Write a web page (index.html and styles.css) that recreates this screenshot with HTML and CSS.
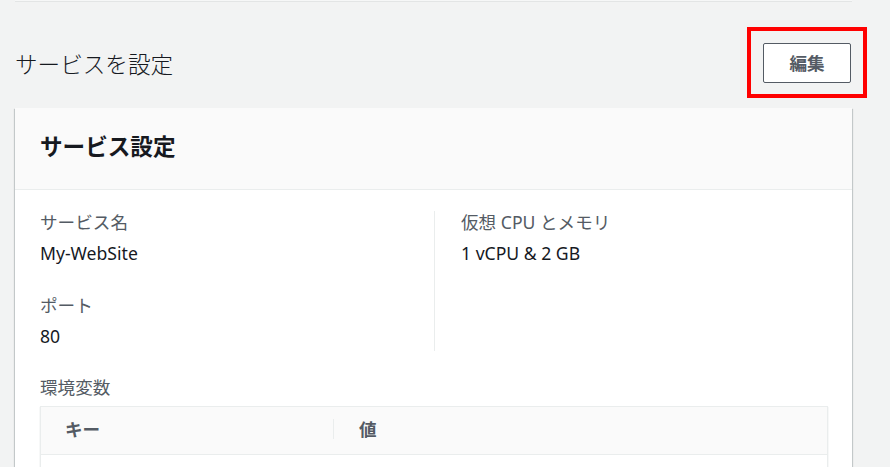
FILE: index.html
```html
<!DOCTYPE html>
<html lang="ja">
<head>
<meta charset="utf-8">
<link rel="stylesheet" href="styles.css">
</head>
<body>
<div class="prev-card"></div>
<div class="section-head">
  <h2 class="section-title">サービスを設定</h2>
  <span class="highlight"><button class="btn">編集</button></span>
</div>
<div class="card">
  <div class="card-header"><h3 class="card-title">サービス設定</h3></div>
  <div class="card-body">
    <div class="cols">
      <div class="col">
        <div class="field">
          <div class="label">サービス名</div>
          <div class="value">My-WebSite</div>
        </div>
        <div class="field">
          <div class="label">ポート</div>
          <div class="value">80</div>
        </div>
      </div>
      <div class="col col-right">
        <div class="field">
          <div class="label">仮想 CPU とメモリ</div>
          <div class="value">1 vCPU &amp; 2 GB</div>
        </div>
      </div>
    </div>
    <div class="label env-label">環境変数</div>
    <div class="table">
      <div class="thead">
        <div class="th">キー</div>
        <div class="th th-sep">値</div>
      </div>
      <div class="tbody"></div>
    </div>
  </div>
</div>
</body>
</html>
```

FILE: styles.css
```css
html, body {
  margin: 0;
  padding: 0;
}
body {
  background: #f2f3f3;
  font-family: "Noto Sans", "Noto Sans CJK JP", sans-serif;
  color: #16191f;
  height: 467px;
  overflow: hidden;
}
.prev-card {
  margin-left: 15px;
  width: 837px;
  height: 1px;
  background: #f6f7f7;
  border-bottom: 1px solid #e3e5e5;
}
.section-head {
  display: flex;
  justify-content: space-between;
  align-items: center;
  margin-top: 25px;
  padding: 0 23px 0 15px;
}
.section-title {
  margin: 3px 0 0;
  font-family: "Noto Sans CJK JP", sans-serif;
  font-size: 22.6px;
  font-weight: 300;
  line-height: 28px;
  color: #16191f;
}
.highlight {
  display: block;
  border: 4px solid #ff0000;
  padding: 12px 12px 11px;
}
.btn {
  display: block;
  width: 88px;
  height: 40px;
  background: #fff;
  border: 1px solid #545b64;
  border-radius: 2px;
  font-family: "Noto Sans CJK JP", sans-serif;
  font-size: 17.6px;
  font-weight: 700;
  color: #545b64;
  padding: 0 0 2px;
}
.card {
  margin: 10px 0 0 15px;
  width: 837px;
  background: #fff;
  box-shadow: 0 1px 1px 0 rgba(0, 28, 36, 0.3), 1px 1px 1px 0 rgba(0, 28, 36, 0.15), -1px 1px 1px 0 rgba(0, 28, 36, 0.15);
}
.card-header {
  height: 82px;
  box-sizing: border-box;
  background: #fafafa;
  border-bottom: 1px solid #eaeded;
  display: flex;
  align-items: center;
  padding: 0 25px 6px;
}
.card-title {
  margin: 0;
  font-family: "Noto Sans CJK JP", sans-serif;
  font-size: 22.6px;
  font-weight: 700;
  line-height: 28px;
  color: #16191f;
}
.card-body {
  padding: 21px 24px 0 25px;
}
.cols {
  display: grid;
  grid-template-columns: 1fr 1fr;
}
.col {
  padding-bottom: 4px;
}
.col-right {
  border-left: 1px solid #eaeded;
  padding-left: 26px;
}
.field + .field {
  margin-top: 30px;
}
.label {
  font-family: "Noto Sans", "Noto Sans CJK JP", sans-serif;
  font-size: 17.6px;
  line-height: 22px;
  color: #545b64;
}
.value {
  margin-top: 9px;
  font-size: 17.6px;
  line-height: 22px;
  color: #16191f;
}
.env-label {
  margin-top: 25px;
}
.table {
  margin-top: 8px;
  border: 1px solid #eaeded;
  box-shadow: 0 1px 1px 0 rgba(0, 28, 36, 0.2);
}
.thead {
  display: grid;
  grid-template-columns: 292px 1fr;
  align-items: center;
  height: 48px;
  box-sizing: border-box;
  padding-bottom: 3px;
  background: #fafafa;
  border-bottom: 1px solid #eaeded;
}
.th {
  font-family: "Noto Sans CJK JP", sans-serif;
  font-size: 17.6px;
  font-weight: 700;
  line-height: 20px;
  color: #545b64;
  padding-left: 24px;
}
.th-sep {
  border-left: 1px solid #eaeded;
  padding-left: 25px;
}
.tbody {
  height: 40px;
  background: #fff;
}
```
